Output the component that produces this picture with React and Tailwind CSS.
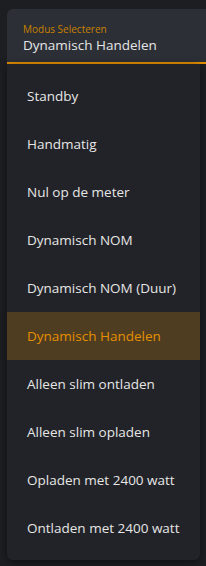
import React from "react";

const modes = [
  "Standby",
  "Handmatig",
  "Nul op de meter",
  "Dynamisch NOM",
  "Dynamisch NOM (Duur)",
  "Dynamisch Handelen",
  "Alleen slim ontladen",
  "Alleen slim opladen",
  "Opladen met 2400 watt",
  "Ontladen met 2400 watt",
];

export default function App() {
  const selected = "Dynamisch Handelen";
  return (
    <div
      className="relative h-[566px] w-[206px] overflow-hidden bg-[#1d1e22] pl-[7px] pt-[9px]"
      style={{ fontFamily: '"Open Sans", "Noto Sans", sans-serif' }}
    >
      <div className="rounded-tl-[6px] border-b-2 border-[#e48f00] bg-[#2c2f36] pl-4 pt-[13px] h-[55px]">
        <div className="text-[10px] leading-[14px] text-[#c98100]">Modus Selecteren</div>
        <div className="text-[13.5px] leading-[18px] text-[#e6e6e6]">{selected}</div>
      </div>
      <div className="w-[193px] rounded-b-[6px] bg-[#222328] py-2 shadow-[0_2px_8px_rgba(0,0,0,0.5)]">
        {modes.map((m) => (
          <div
            key={m}
            className={
              m === selected
                ? "flex h-12 items-center bg-[#4f3d22] pl-5 text-[13.5px] text-[#e48f00]"
                : "flex h-12 items-center pl-5 text-[13.5px] font-medium text-[#e6e6e6]"
            }
          >
            {m}
          </div>
        ))}
      </div>
    </div>
  );
}
